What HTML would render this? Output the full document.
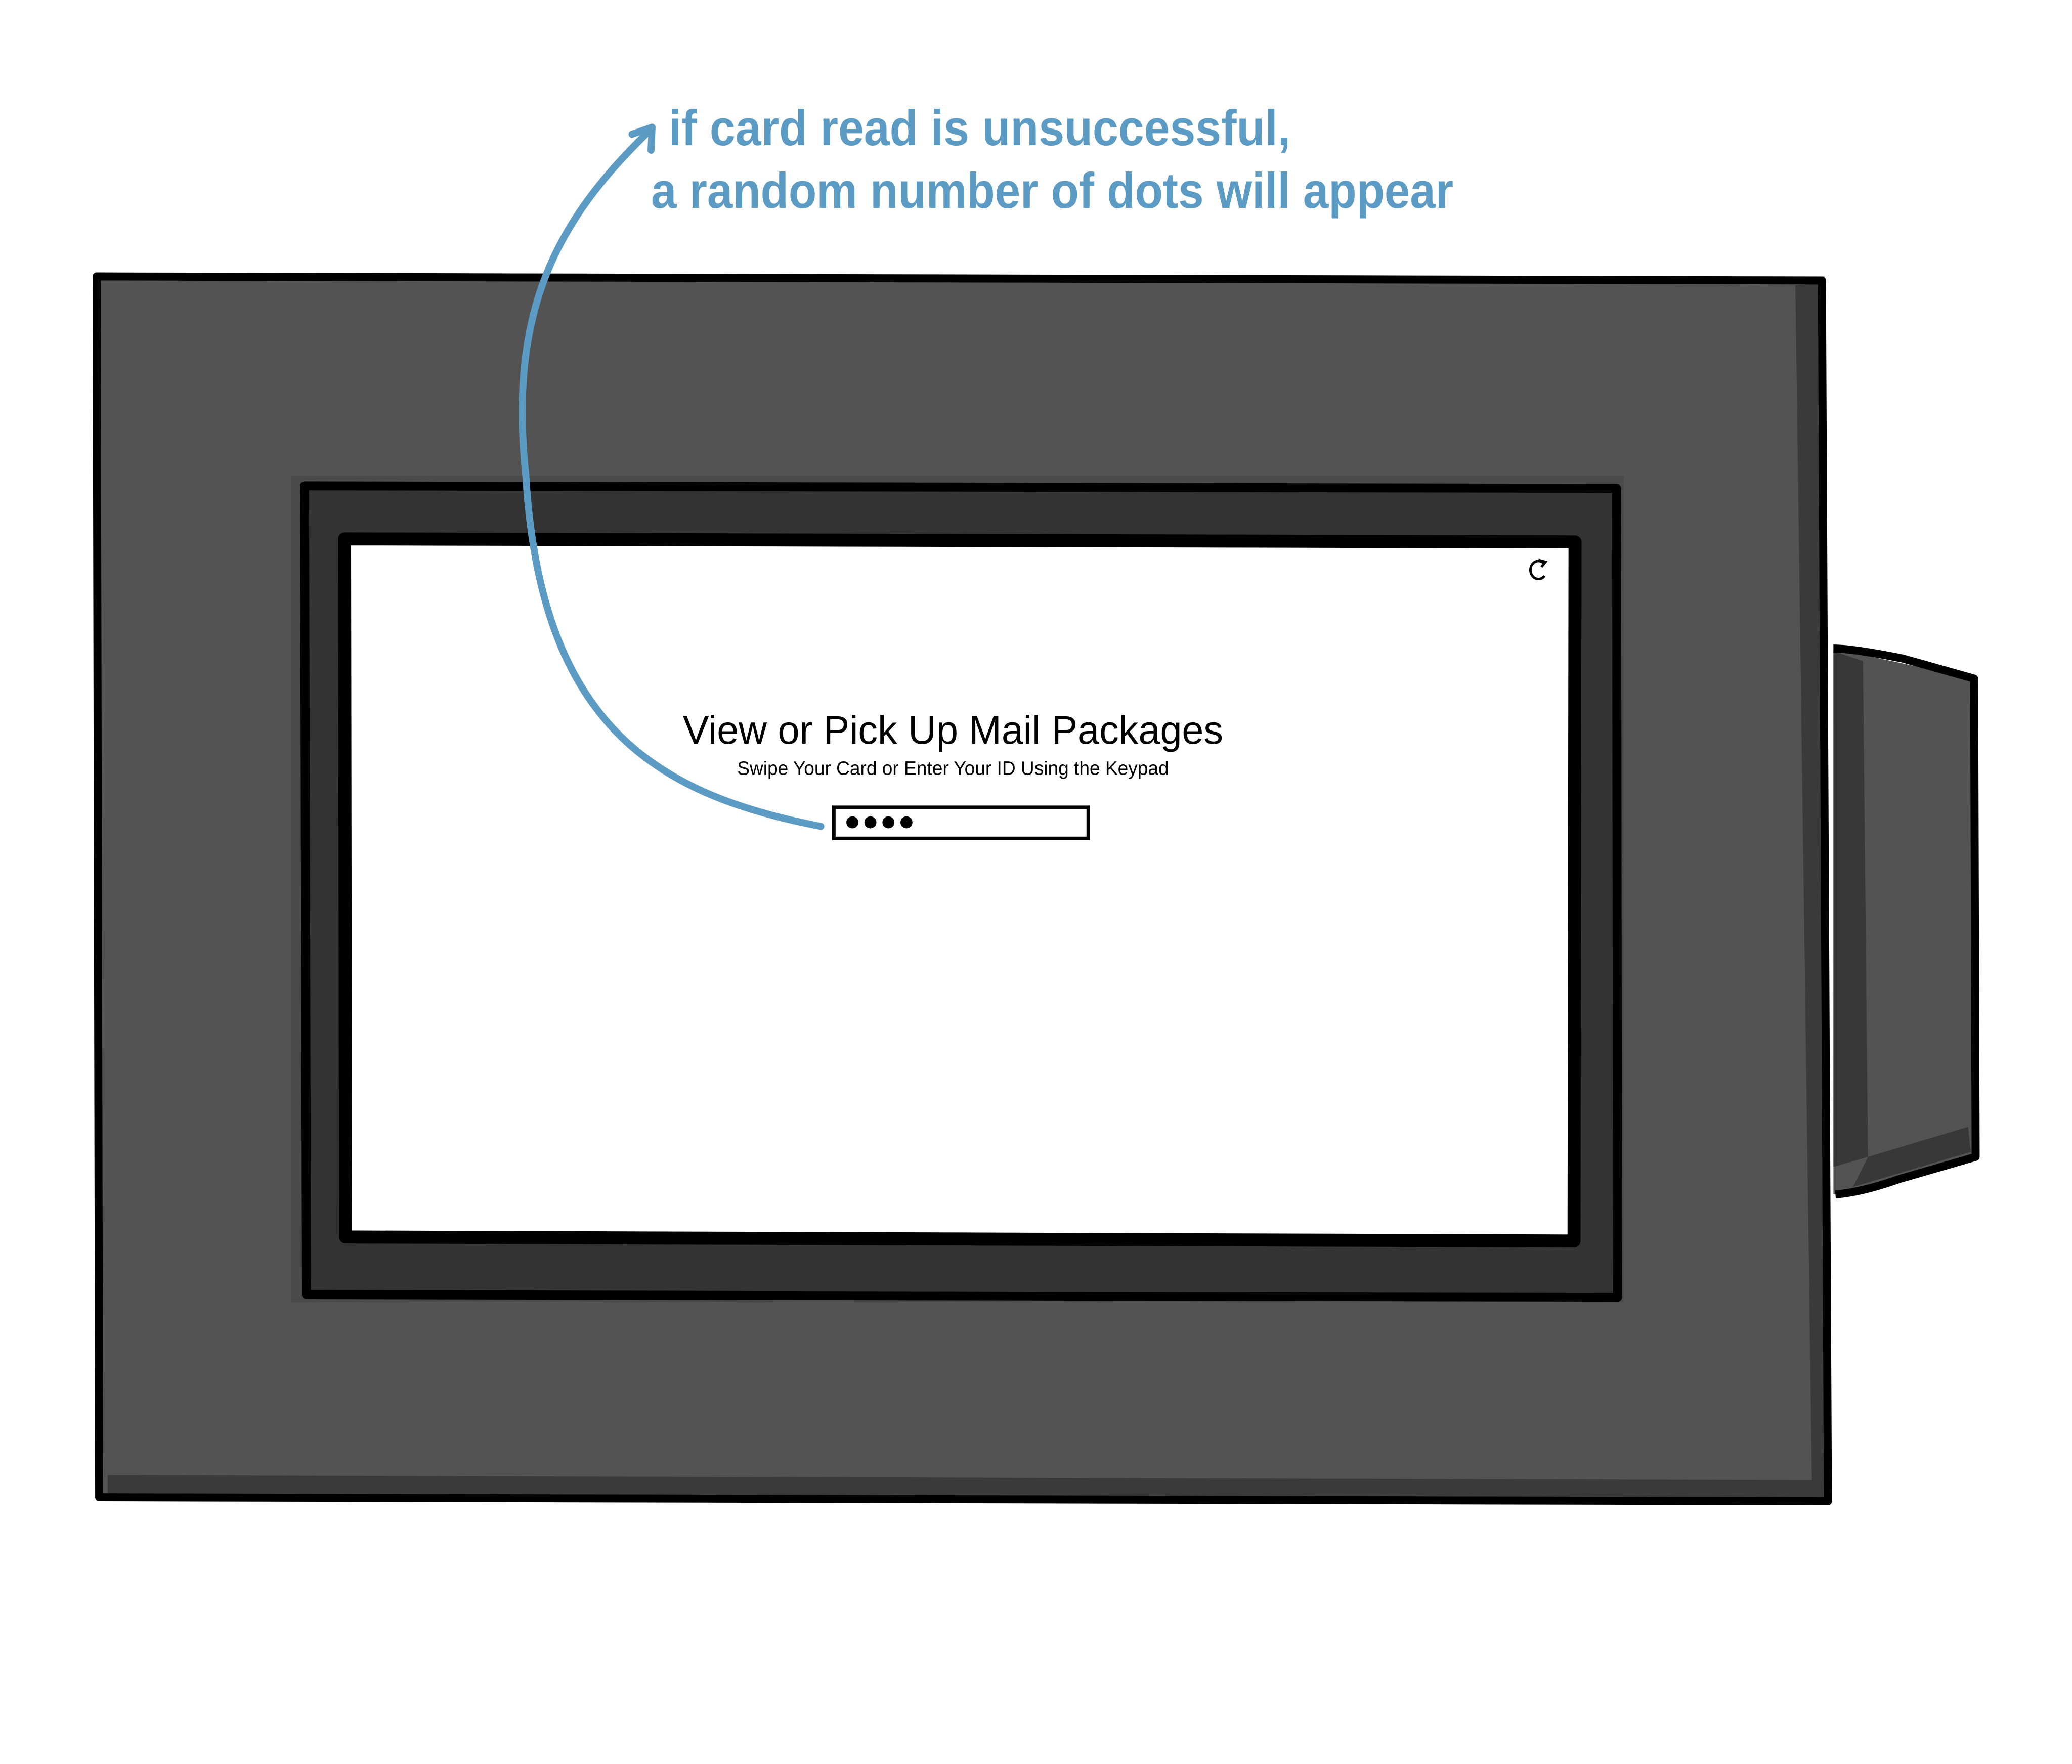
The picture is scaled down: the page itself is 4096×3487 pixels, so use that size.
<!DOCTYPE html>
<html><head><style>
html,body{margin:0;padding:0;background:#fff;}
body{width:4096px;height:3487px;position:relative;overflow:hidden;font-family:"Liberation Sans",sans-serif;}
.a{position:absolute;box-sizing:border-box;}
</style></head><body>
<svg class="a" style="left:0;top:0" width="4096" height="3487">
<g transform="scale(0.99)">
  <rect x="193" y="552" width="3450" height="2440" fill="#535353"/>
  <polygon points="3585,570 3640,565 3650,2990 215,2990 215,2945 3618,2955" fill="#3a3a3a"/>
  <path d="M193 552 L3638 560 L3650 2998 L198 2990 Z" fill="none" stroke="#000" stroke-width="16" stroke-linejoin="round"/>
  <path d="M3661 1295 L3940 1355 L3942 2310 L3700 2380 L3661 2385 Z" fill="#535353"/>
  <path d="M3661 1300 L3720 1320 L3730 2310 L3661 2330 Z" fill="#383838"/>
  <path d="M3730 2310 L3930 2250 L3935 2300 L3700 2370 Z" fill="#383838"/>
  <path d="M3661 1295 Q3700 1295 3800 1315 L3942 1355 L3945 2310 L3790 2355 Q3720 2380 3665 2385" fill="none" stroke="#000" stroke-width="16" stroke-linejoin="round"/>
  <rect x="582" y="950" width="2660" height="1650" fill="#4a4a4a"/>
  <rect x="608" y="967" width="2622" height="1623" fill="#333"/>
  <path d="M608 970 L3228 975 L3230 2590 L612 2585 Z" fill="none" stroke="#000" stroke-width="18" stroke-linejoin="round"/>
  <rect x="692" y="1078" width="2453" height="1399" fill="#fff"/>
  <path d="M688 1076 L3145 1082 L3143 2478 L690 2470 Z" fill="none" stroke="#000" stroke-width="26" stroke-linejoin="round"/>
  <rect x="1665" y="1612" width="508" height="62" fill="#fff" stroke="#000" stroke-width="7"/>
  <circle cx="1702" cy="1642" r="12"/><circle cx="1738" cy="1642" r="12"/><circle cx="1774" cy="1642" r="12"/><circle cx="1810" cy="1642" r="12"/>
  <path d="M3082 1124 A16 18 0 1 0 3084 1150" fill="none" stroke="#000" stroke-width="5"/>
  <path d="M3072 1118 L3086 1122 L3078 1132" fill="none" stroke="#000" stroke-width="5"/>
  <path d="M1639 1650 C1300 1585 1080 1440 1050 950 C1015 620 1110 440 1300 258" fill="none" stroke="#5b9bc4" stroke-width="14" stroke-linecap="round"/>
  <path d="M1262 268 L1302 254 L1300 300" fill="none" stroke="#5b9bc4" stroke-width="14" stroke-linecap="round" stroke-linejoin="round"/>
  <text x="1903" y="1485" text-anchor="middle" font-family="Liberation Sans, sans-serif" font-size="80" fill="#000" textLength="1079" lengthAdjust="spacingAndGlyphs">View or Pick Up Mail Packages</text>
  <text x="1903" y="1547" text-anchor="middle" font-family="Liberation Sans, sans-serif" font-size="38" fill="#000" textLength="862" lengthAdjust="spacingAndGlyphs">Swipe Your Card or Enter Your ID Using the Keypad</text>
  <text x="1335" y="290" font-family="Liberation Sans, sans-serif" font-size="100" font-weight="bold" fill="#5b9bc4" textLength="1242" lengthAdjust="spacingAndGlyphs">if card read is unsuccessful,</text>
  <text x="1300" y="415" font-family="Liberation Sans, sans-serif" font-size="100" font-weight="bold" fill="#5b9bc4" textLength="1602" lengthAdjust="spacingAndGlyphs">a random number of dots will appear</text>
</g>
</svg>
</body></html>
